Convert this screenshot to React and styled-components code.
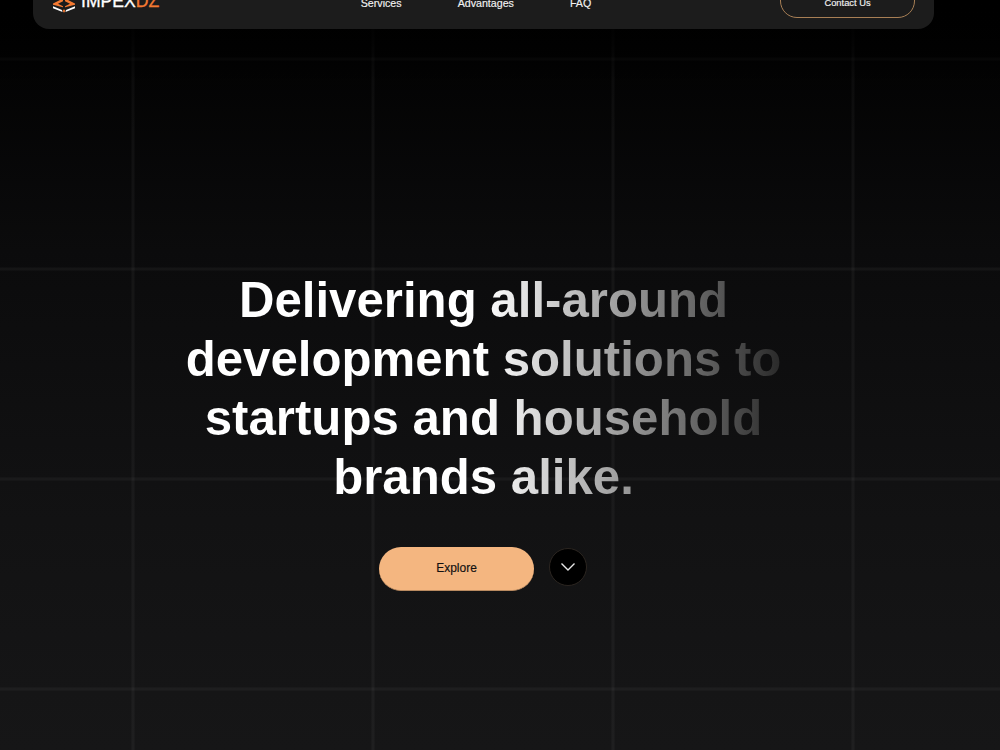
import React from "react";
import styled, { createGlobalStyle } from "styled-components";

const Global = createGlobalStyle`
  html, body { margin: 0; padding: 0; background: #000; }
  body { font-family: "Liberation Sans", Arial, sans-serif; color: #fff; }
`;

const Page = styled.div`
  position: relative;
  width: 1000px;
  height: 750px;
  overflow: hidden;
  box-sizing: border-box;
  padding: 0 66px 0 33px;
  background:
    linear-gradient(180deg, #000 0, rgba(0,0,0,.8) 35px, rgba(0,0,0,.15) 80px, rgba(0,0,0,0) 140px) 0 0 / 100% 100% no-repeat,
    linear-gradient(90deg, transparent 117.5px, rgba(255,255,255,.02) 118.5px, rgba(255,255,255,.05) 120px, rgba(255,255,255,.02) 121.5px, transparent 122.5px) 13px 0 / 240px 210px,
    linear-gradient(180deg, transparent 102.5px, rgba(255,255,255,.02) 103.5px, rgba(255,255,255,.05) 105px, rgba(255,255,255,.02) 106.5px, transparent 107.5px) 0 -46px / 240px 210px,
    linear-gradient(180deg, #000 0, #0b0b0c 250px, #121213 520px, #161617 750px);
`;

const Nav = styled.nav`
  height: 80px;
  margin-top: -51px;
  padding: 0 19px 11px 20px;
  box-sizing: border-box;
  display: grid;
  grid-template-columns: 1fr auto 1fr;
  align-items: flex-end;
  background: #1c1c1c;
  border-radius: 16px;
`;

const Logo = styled.a`
  display: flex;
  align-items: flex-end;
  gap: 5px;
  margin-bottom: 5px;
`;

const LogoWord = styled.span`
  font-size: 17.6px;
  line-height: 22px;
  font-weight: 400;
  color: #fff;
  margin-bottom: 1px;
  -webkit-text-stroke: 0.3px currentColor;
`;

const LogoAccent = styled.span`
  color: #f47a32;
`;

const Links = styled.div`
  display: flex;
  gap: 56px;
  margin: 0 16px 8px 0;
`;

const NavLink = styled.a`
  font-size: 10.67px;
  line-height: 14px;
  color: #f2f2f2;
  -webkit-text-stroke: 0.15px currentColor;
`;

const Contact = styled.a`
  justify-self: end;
  width: 135px;
  height: 38px;
  box-sizing: border-box;
  display: flex;
  align-items: center;
  justify-content: center;
  padding-top: 7px;
  font-size: 9.33px;
  color: #f2f2f2;
  border: 1px solid #a87f55;
  border-radius: 17px;
  -webkit-text-stroke: 0.15px currentColor;
`;

const Hero = styled.section`
  display: flex;
  flex-direction: column;
  align-items: center;
  padding-top: 241px;
`;

const Title = styled.h1`
  margin: 0;
  width: fit-content;
  font-size: 49.2px;
  line-height: 59px;
  font-weight: 700;
  text-align: center;
  white-space: nowrap;
  color: transparent;
  background: linear-gradient(90deg, #fff 298px, #262626 600px);
  -webkit-background-clip: text;
  background-clip: text;
`;

const Line = styled.span`
  display: block;
`;

const Actions = styled.div`
  display: flex;
  align-items: center;
  gap: 15px;
  margin-top: 41px;
  margin-left: -1px;
`;

const Explore = styled.a`
  width: 155px;
  height: 43.5px;
  box-sizing: border-box;
  display: flex;
  align-items: center;
  justify-content: center;
  font-size: 12px;
  color: #111;
  background: #f4b680;
  border-bottom: 1px solid #b98a60;
  border-radius: 22px;
  -webkit-text-stroke: 0.15px currentColor;
`;

const Circle = styled.a`
  width: 38px;
  height: 38px;
  margin-top: -3px;
  box-sizing: border-box;
  display: flex;
  align-items: center;
  justify-content: center;
  background: #000;
  border: 1px solid #2b2520;
  border-radius: 50%;
`;

const LogoIcon = () => (
  <svg width="23" height="24" viewBox="53 -11 23 24">
    <path d="M53 3.5 L63 -1.5 L63 1.2 L58 3.8 L63 6.3 L63 7.2 L53 4.8Z" fill="#f47a32" />
    <path d="M75 3.5 L65 -1.5 L65 1.2 L70 3.8 L65 6.3 L65 7.2 L75 4.8Z" fill="#f47a32" />
    <path d="M53 6.2 L62 10 L62.5 12 L53 8.2Z" fill="#fff" />
    <path d="M75 6.2 L66 10 L65.5 12 L75 8.2Z" fill="#fff" />
    <path d="M64 9 L62.7 11 L64 12.8 L65.3 11Z" fill="#f47a32" />
  </svg>
);

const Chevron = () => (
  <svg width="16" height="16" viewBox="0 0 16 16" fill="none" stroke="#e8e8e8" strokeWidth="1.4">
    <path d="M1.5 4.5 L8 11 L14.5 4.5" />
  </svg>
);

export default function App() {
  return (
    <Page>
      <Global />
      <Nav>
        <Logo>
          <LogoIcon />
          <LogoWord>IMPEX<LogoAccent>DZ</LogoAccent></LogoWord>
        </Logo>
        <Links>
          <NavLink>Services</NavLink>
          <NavLink>Advantages</NavLink>
          <NavLink>FAQ</NavLink>
        </Links>
        <Contact>Contact Us</Contact>
      </Nav>
      <Hero>
        <Title>
          <Line>Delivering all-around</Line>
          <Line>development solutions to</Line>
          <Line>startups and household</Line>
          <Line>brands alike.</Line>
        </Title>
        <Actions>
          <Explore>Explore</Explore>
          <Circle><Chevron /></Circle>
        </Actions>
      </Hero>
    </Page>
  );
}
